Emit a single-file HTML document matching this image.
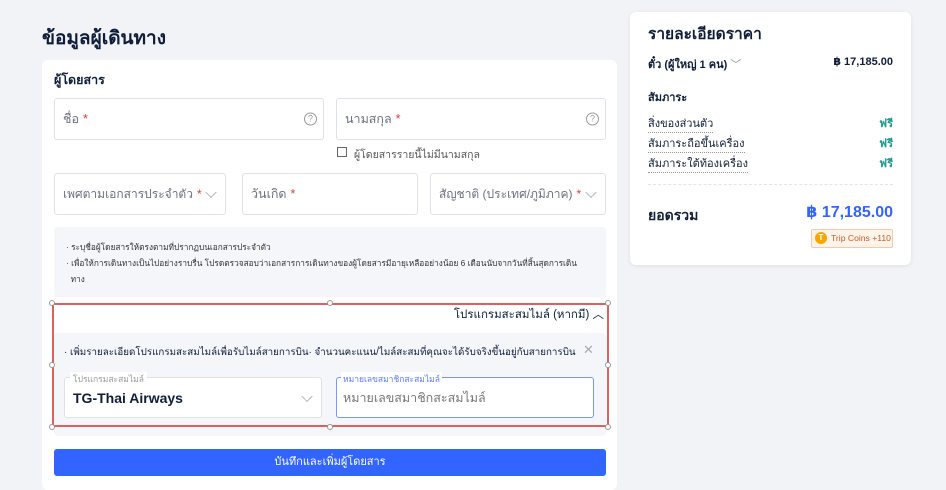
<!DOCTYPE html>
<html><head><meta charset="utf-8"><style>
*{box-sizing:border-box;margin:0;padding:0}
body{width:946px;height:480px;overflow:hidden;background:#f2f3f7;font-family:"Liberation Sans","DejaVu Sans",sans-serif;color:#0f1d3a;position:relative}
.a{position:absolute;white-space:nowrap}
.card{background:#fff;border-radius:6px}
.inp{position:absolute;border:1px solid #dfe2e8;border-radius:3px;background:#fff;font-size:12.5px;color:#6b7280;padding-left:8px;display:flex;align-items:center;white-space:nowrap;overflow:hidden}
.inp b{color:#e53935;font-weight:normal;margin-left:4px}
.chev{position:absolute;right:10px;top:50%;width:8px;height:8px;border-right:1px solid #b0b5bf;border-bottom:1px solid #b0b5bf;transform:translateY(-70%) rotate(45deg);background:#fff}
.q{position:absolute;right:6px;top:50%;transform:translateY(-50%);width:13px;height:13px;border:1px solid #999;border-radius:50%;font-size:9px;color:#999;text-align:center;line-height:11px}
.row{display:flex;justify-content:space-between;font-size:11px}
.dash{border-bottom:1px dotted #999}
.h{width:6px;height:6px;border:1px solid #999;border-radius:50%;background:#fff;position:absolute}
</style></head><body>
<div class="a" style="left:42px;top:23px;font-size:19px;font-weight:bold">ข้อมูลผู้เดินทาง</div>
<div class="a card" style="left:42px;top:60px;width:575px;height:430px"></div>
<div class="a" style="left:54px;top:70px;font-size:12.5px;font-weight:bold">ผู้โดยสาร</div>
<div class="inp" style="left:54px;top:98px;width:270px;height:42px">ชื่อ<b>*</b><span class="q">?</span></div>
<div class="inp" style="left:336px;top:98px;width:270px;height:42px">นามสกุล<b>*</b><span class="q">?</span></div>
<div class="a" style="left:337px;top:147px;width:10px;height:10px;border:1px solid #666"></div>
<div class="a" style="left:354px;top:146px;font-size:10.5px;color:#555">ผู้โดยสารรายนี้ไม่มีนามสกุล</div>
<div class="inp" style="left:54px;top:173px;width:172px;height:42px;font-size:12px">เพศตามเอกสารประจำตัว<b>*</b><span class="chev"></span></div>
<div class="inp" style="left:242px;top:173px;width:176px;height:42px">วันเกิด<b>*</b></div>
<div class="inp" style="left:430px;top:173px;width:176px;height:42px;font-size:12px">สัญชาติ (ประเทศ/ภูมิภาค)<b>*</b><span class="chev"></span></div>
<div class="a" style="left:54px;top:227px;width:552px;height:70px;background:#f5f6fa;border-radius:4px;font-size:8.3px;color:#333;padding:12px 12px;line-height:16px;white-space:nowrap">
· ระบุชื่อผู้โดยสารให้ตรงตามที่ปรากฏบนเอกสารประจำตัว<br>· เพื่อให้การเดินทางเป็นไปอย่างราบรื่น โปรดตรวจสอบว่าเอกสารการเดินทางของผู้โดยสารมีอายุเหลืออย่างน้อย 6 เดือนนับจากวันที่สิ้นสุดการเดิน<br>&nbsp;&nbsp;ทาง</div>
<div class="a" style="left:400px;top:306px;width:204px;text-align:right;font-size:11.5px">โปรแกรมสะสมไมล์ (หากมี) ︿</div>
<div class="a" style="left:54px;top:333px;width:552px;height:103px;background:#f5f6fa;border-radius:4px"></div>
<div class="a" style="left:64px;top:345px;font-size:9.8px">· เพิ่มรายละเอียดโปรแกรมสะสมไมล์เพื่อรับไมล์สายการบิน· จำนวนคะแนน/ไมล์สะสมที่คุณจะได้รับจริงขึ้นอยู่กับสายการบิน</div>
<div class="a" style="left:583px;top:342px;font-size:13px;color:#aaa">✕</div>
<div class="inp" style="left:64px;top:377px;width:258px;height:41px;color:#0f1d3a;font-size:14px;font-weight:bold;padding-left:8px">TG-Thai Airways<span class="chev"></span></div>
<div class="a" style="left:70px;top:372px;font-size:8.5px;color:#999;background:#fff;padding:0 3px">โปรแกรมสะสมไมล์</div>
<div class="inp" style="left:336px;top:377px;width:258px;height:41px;border-color:#7a95ff;color:#777;font-size:12.5px;padding-left:6px">หมายเลขสมาชิกสะสมไมล์</div>
<div class="a" style="left:341px;top:372px;font-size:8.5px;color:#5a7aff;background:#fff;padding:0 2px">หมายเลขสมาชิกสะสมไมล์</div>
<div class="a" style="left:52px;top:303px;width:557px;height:124px;border:2px solid #e06060"></div>
<div class="h" style="left:49px;top:300px"></div><div class="h" style="left:327px;top:300px"></div><div class="h" style="left:605px;top:300px"></div>
<div class="h" style="left:49px;top:362px"></div><div class="h" style="left:605px;top:362px"></div>
<div class="h" style="left:49px;top:424px"></div><div class="h" style="left:327px;top:424px"></div><div class="h" style="left:605px;top:424px"></div>
<div class="a" style="left:54px;top:449px;width:552px;height:27px;background:#3264ff;border-radius:3px;color:#fff;font-size:11px;text-align:center;line-height:27px">บันทึกและเพิ่มผู้โดยสาร</div>

<div class="a card" style="left:630px;top:12px;width:281px;height:253px;box-shadow:0 1px 4px rgba(0,0,0,.08)">
<div class="a" style="left:18px;top:9px;font-size:15.5px;font-weight:bold">รายละเอียดราคา</div>
<div class="a row" style="left:18px;top:43px;width:245px;font-weight:bold"><span>ตั๋ว (ผู้ใหญ่ 1 คน) <span style="color:#999;font-weight:normal">﹀</span></span><span>฿ 17,185.00</span></div>
<div class="a" style="left:18px;top:76px;font-size:11px;font-weight:bold">สัมภาระ</div>
<div class="a row" style="left:18px;top:102px;width:245px"><span class="dash">สิ่งของส่วนตัว</span><span style="color:#1a9a8c;font-weight:bold">ฟรี</span></div>
<div class="a row" style="left:18px;top:122px;width:245px"><span class="dash">สัมภาระถือขึ้นเครื่อง</span><span style="color:#1a9a8c;font-weight:bold">ฟรี</span></div>
<div class="a row" style="left:18px;top:142px;width:245px"><span class="dash">สัมภาระใต้ท้องเครื่อง</span><span style="color:#1a9a8c;font-weight:bold">ฟรี</span></div>
<div class="a" style="left:18px;top:172px;width:245px;border-top:1px dashed #e3e5ea"></div>
<div class="a" style="left:18px;top:193px;font-size:14px;font-weight:bold">ยอดรวม</div>
<div class="a" style="left:150px;top:190px;width:113px;text-align:right;font-size:16px;font-weight:bold;color:#3264ff">฿ 17,185.00</div>
<div class="a" style="left:181px;top:217px;width:82px;height:19px;border:1px solid #f7c9a8;background:#fff3ea;border-radius:2px;font-size:8.6px;color:#c0602a;line-height:17px;padding-left:19px">Trip Coins +110</div>
<div class="a" style="left:185px;top:220px;width:12px;height:12px;border-radius:50%;background:#f5a800;color:#fff;font-size:8px;text-align:center;line-height:12px;font-weight:bold">T</div>
</div>
</body></html>
